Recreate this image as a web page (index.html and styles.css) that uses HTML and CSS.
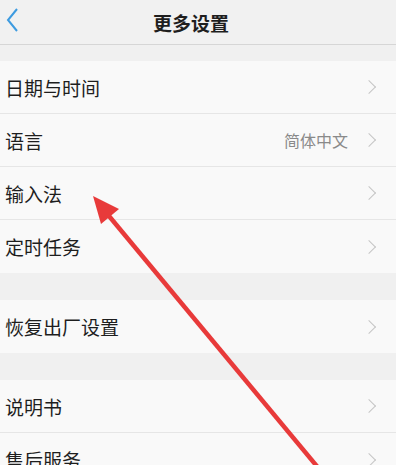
FILE: index.html
```html
<!DOCTYPE html>
<html lang="zh-CN">
<head>
    <meta charset="UTF-8">
    <title>更多设置</title>
    <link rel="stylesheet" href="styles.css">
</head>
<body>
    <div class="page">
        <div class="header">
            <span class="back">
                <svg width="16" height="26" viewBox="0 0 16 26"><path d="M12 2 L3 13 L12 24" fill="none" stroke="#3d9be0" stroke-width="2"/></svg>
            </span>
            <h1>更多设置</h1>
        </div>

        <div class="gap top"></div>
        <div class="group">
            <div class="row"><span class="label">日期与时间</span><span class="chev"></span></div>
            <div class="row"><span class="label">语言</span><span class="value">简体中文</span><span class="chev"></span></div>
            <div class="row"><span class="label">输入法</span><span class="chev"></span></div>
            <div class="row"><span class="label">定时任务</span><span class="chev"></span></div>
        </div>

        <div class="gap"></div>
        <div class="group">
            <div class="row"><span class="label">恢复出厂设置</span><span class="chev"></span></div>
        </div>

        <div class="gap"></div>
        <div class="group">
            <div class="row"><span class="label">说明书</span><span class="chev"></span></div>
            <div class="row"><span class="label">售后服务</span><span class="chev"></span></div>
        </div>
    </div>

    <svg class="arrow" width="401" height="465" viewBox="0 0 401 465">
        <line x1="104" y1="210" x2="330" y2="482" stroke="#e83a3a" stroke-width="4.5"/>
        <polygon points="93,196 101,224 119,209" fill="#e83a3a"/>
    </svg>
</body>
</html>
```

FILE: styles.css
```css
body {
    margin: 0;
    background: #ffffff;
    font-family: "Noto Sans CJK SC", "Noto Sans", sans-serif;
    height: 465px;
    overflow: hidden;
    position: relative;
}
.page {
    width: 396px;
    background: #f0f0f0;
    min-height: 465px;
}
.header {
    height: 45px;
    background: #f1f1f1;
    border-bottom: 1px solid #d6d6d6;
    box-sizing: border-box;
    display: flex;
    align-items: center;
    justify-content: center;
    position: relative;
}
.back {
    position: absolute;
    left: 5px;
    top: 7px;
}
h1 {
    margin: 0;
    font-size: 19px;
    font-weight: 700;
    color: #1e1e1e;
    margin-left: -14px;
}
.gap {
    height: 27px;
}
.gap.top {
    height: 16px;
}
.group {
    background: #f9f9f9;
}
.row {
    height: 53px;
    display: flex;
    align-items: center;
    padding: 0 18px 0 5px;
    border-bottom: 1px solid #e6e6e6;
    box-sizing: border-box;
}
.row:last-child {
    border-bottom: none;
}
.label {
    flex: 1;
    font-size: 19px;
    color: #1e1e1e;
}
.value {
    font-size: 16px;
    color: #8a8a8a;
    margin-right: 16px;
}
.chev {
    width: 9px;
    height: 9px;
    border-top: 1.5px solid #c6c6c6;
    border-right: 1.5px solid #c6c6c6;
    transform: rotate(45deg);
    margin-right: 4px;
}
.arrow {
    position: absolute;
    left: 0;
    top: 0;
}
```
